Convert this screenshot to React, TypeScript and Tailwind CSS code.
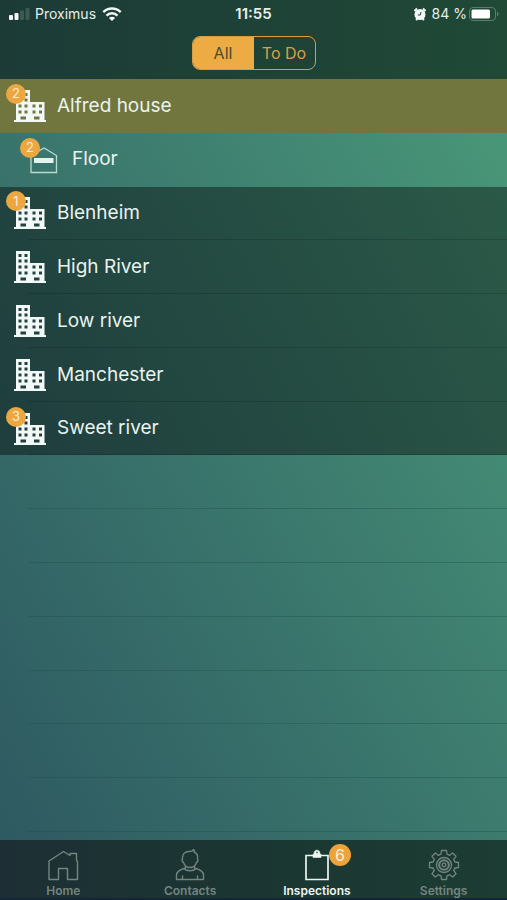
import React, { useState } from 'react';

interface Place {
  name: string;
  kind: 'building' | 'floor';
  count?: number;
  selected?: boolean;
}

interface TabItem {
  label: string;
  icon: React.ReactNode;
  count?: number;
}

const places: Place[] = [
  { name: 'Alfred house', kind: 'building', count: 2, selected: true },
  { name: 'Floor', kind: 'floor', count: 2 },
  { name: 'Blenheim', kind: 'building', count: 1 },
  { name: 'High River', kind: 'building' },
  { name: 'Low river', kind: 'building' },
  { name: 'Manchester', kind: 'building' },
  { name: 'Sweet river', kind: 'building', count: 3 },
];

const blankRows = [0, 1, 2, 3, 4, 5, 6];

const BuildingIcon = () => (
  <svg viewBox="0 0 32 32" className="h-8 w-8" fill="#f2f8f5" fillRule="evenodd" aria-hidden="true">
    {/* walls with the windows cut out */}
    <path d="M2 0H16V12H30.500V30H32V32H0V30H2ZM4.500 3V6H7.500V3ZM10.500 3V6H13.500V3ZM4.500 8.500V11.500H7.500V8.500ZM10.500 8.500V11.500H13.500V8.500ZM4.500 14.500V17.500H7.500V14.500ZM10.500 14.500V17.500H13.500V14.500ZM4.500 20.500V23.500H7.500V20.500ZM10.500 20.500V23.500H13.500V20.500ZM18.500 14.500V17.500H21.500V14.500ZM25 14.500V17.500H28V14.500ZM18.500 20.500V23.500H21.500V20.500ZM25 20.500V23.500H28V20.500ZM6.500 26.500V29.500H12V26.500ZM20 26.500V29.500H25.500V26.500Z" />
  </svg>
);

const FloorIcon = () => (
  <svg viewBox="0 0 28 28" className="h-7 w-7" fill="none" aria-hidden="true">
    <path d="M1 26.500V9.500L14 2L26.500 9.500V26.500Z" stroke="#b5dccf" strokeWidth="1.300" />
    <path d="M4 12H23.500V17H4Z" fill="#e4f3ee" />
  </svg>
);

const HomeIcon = () => (
  <svg viewBox="0 0 32 32" className="h-8 w-8" fill="none" stroke="currentColor" strokeWidth="1.400" strokeLinejoin="round" aria-hidden="true">
    <path d="M2 30.500V12L16.500 2.500L23 6.500V4.500H29.500V11.500L30.500 12.500V30.500H20.500V19.500H11.500V30.500Z" />
  </svg>
);

const ContactIcon = () => (
  <svg viewBox="0 0 32 32" className="h-8 w-8" fill="none" stroke="currentColor" strokeWidth="1.400" strokeLinejoin="round" strokeLinecap="round" aria-hidden="true">
    <path d="M8.500 10C8 5 11 2.500 15 2.500C17 2.500 19 2 19.500 0.500C20.500 1.500 20.500 2.500 20 3C23 4 24 6.500 23.500 10C24.500 11 23.500 13 22.500 13.500C21.500 16.500 19 18.500 16 18.500C13 18.500 10.500 16.500 9.500 13.500C8.500 13 7.500 11 8.500 10Z" />
    <path d="M11.500 17.500V19C6 20.500 2.500 22 2.500 26V30.500H29.500V26C29.500 22 26 20.500 20.500 19V17.500" />
    <path d="M10 19.500C12.500 22.500 19.500 22.500 22 19.500M8.500 27V30M23.500 27V30" />
  </svg>
);

const ClipboardIcon = () => (
  <svg viewBox="0 0 32 32" className="h-8 w-8" fill="none" aria-hidden="true">
    <path d="M5 6.500H27V30.500H5Z" stroke="currentColor" strokeWidth="1.700" />
    <path fillRule="evenodd" d="M12 8.500V5.500L13 4.500C13 0 19 0 19 4.500L20 5.500V8.500ZM16 2.500A1 1 0 1 0 16 4.500A1 1 0 1 0 16 2.500Z" fill="currentColor" stroke="currentColor" strokeWidth="0.600" />
  </svg>
);

const GearIcon = () => (
  <svg viewBox="0 0 32 32" className="h-8 w-8" fill="none" stroke="currentColor" strokeWidth="1.300" strokeLinejoin="round" aria-hidden="true">
    <path d="M13.500 1.500H18.500L19 5.200L21.700 6.300L24.700 4L28 7.300L25.700 10.300L26.800 13L30.500 13.500V18.500L26.800 19L25.700 21.700L28 24.700L24.700 28L21.700 25.700L19 26.800L18.500 30.500H13.500L13 26.800L10.300 25.700L7.300 28L4 24.700L6.300 21.700L5.200 19L1.500 18.500V13.500L5.200 13L6.300 10.300L4 7.300L7.300 4L10.300 6.300L13 5.200Z" />
    <circle cx="16" cy="16" r="7.500" />
    <circle cx="16" cy="16" r="4.800" strokeWidth="2" />
    <circle cx="16" cy="16" r="1.800" />
  </svg>
);

const tabs: TabItem[] = [
  { label: 'Home', icon: <HomeIcon /> },
  { label: 'Contacts', icon: <ContactIcon /> },
  { label: 'Inspections', icon: <ClipboardIcon />, count: 6 },
  { label: 'Settings', icon: <GearIcon /> },
];

const StatusBar = () => (
  <div className="grid h-7 grid-cols-3 items-center px-2 text-sm text-[#e6efeb]">
    <div className="flex items-center gap-1">
      <svg viewBox="0 0 22 12" className="h-3 w-[22px]" aria-hidden="true">
        <rect x="1" y="7" width="4" height="5" rx="1" fill="#f2f8f5" />
        <rect x="6.500" y="5" width="4" height="7" rx="1" fill="#f2f8f5" />
        <rect x="12" y="2.500" width="4" height="9.500" rx="1" fill="#3c5c52" />
        <rect x="17.500" y="0" width="4" height="12" rx="1" fill="#3c5c52" />
      </svg>
      <span className="ml-px">Proximus</span>
      <svg viewBox="0 0 20 14" className="ml-[2px] h-[14px] w-5" fill="none" stroke="#f2f8f5" strokeWidth="2.400" aria-hidden="true">
        <path d="M1.300 5.200C6.200 0.300 13.800 0.300 18.700 5.200" />
        <path d="M4.500 8.600C7.500 5.500 12.500 5.500 15.500 8.600" />
        <path d="M10 14L6.900 10.900C8.700 9.200 11.300 9.200 13.100 10.900Z" fill="#f2f8f5" stroke="none" />
      </svg>
    </div>
    <span className="text-center text-[15px] font-semibold">11:55</span>
    <div className="flex items-center justify-end gap-[2px]">
      <svg viewBox="0 0 14 14" className="mr-[3px] h-[14px] w-[14px]" aria-hidden="true">
        <path d="M1.500 4L4 1.500M12.500 4L10 1.500M3 13L4.500 11.500M11 13L9.500 11.500" stroke="#f2f8f5" strokeWidth="2" />
        <circle cx="7" cy="7.500" r="5.500" fill="#f2f8f5" />
        <path d="M8 5L7.300 8H4.800" fill="none" stroke="#1f4237" strokeWidth="1" />
      </svg>
      <span>84 %</span>
      <svg viewBox="0 0 30 14" className="h-[14px] w-[30px]" aria-hidden="true">
        <rect x="0.500" y="0.500" width="26" height="13" rx="3.500" fill="none" stroke="#5d7b70" />
        <rect x="2.500" y="2.500" width="18.500" height="9" rx="1.500" fill="#ffffff" />
        <path d="M28 4.500C30 5.500 30 8.500 28 9.500Z" fill="#5d7b70" />
      </svg>
    </div>
  </div>
);

const PlaceRow = ({ place }: { place: Place }) => {
  const isFloor = place.kind === 'floor';
  const background = place.selected ? 'bg-[#70763e]' : isFloor ? '' : 'bg-black/40';

  return (
    <li className={`flex flex-1 ${background}`}>
      <button
        type="button"
        className={`relative flex flex-1 items-center text-left text-[19px] text-[#e9f3ee] ${isFloor ? 'gap-[14px] pl-[30px]' : 'gap-[11px] pl-[14px]'}`}
      >
        <span className="relative">
          {isFloor ? <FloorIcon /> : <BuildingIcon />}
          {place.count && (
            <span className={`absolute flex h-5 w-5 items-center justify-center rounded-full bg-[#eca740] text-[13px] text-[#f8efd8] ${isFloor ? '-left-[10px] -top-2' : '-left-2 -top-[6px]'}`}>
              {place.count}
            </span>
          )}
        </span>
        <span>{place.name}</span>
        {!place.selected && !isFloor && (
          <span className="absolute bottom-0 left-7 right-0 h-px bg-black/15" />
        )}
      </button>
    </li>
  );
};

const App: React.FC = () => {
  const [filter, setFilter] = useState('All');
  const [activeTab, setActiveTab] = useState('Inspections');

  return (
    <div className="flex min-h-screen flex-col bg-linear-to-tr from-[#2d5760] to-[#4b9c7a] font-[Inter,sans-serif]">
      <header className="h-[79px] bg-linear-to-r from-[#1c3b37] to-[#204936]">
        <StatusBar />
        <div className="flex justify-center pt-2">
          <div className="flex h-[34px] w-[124px] overflow-hidden rounded-lg border border-[#d69d41]">
            {['All', 'To Do'].map((item) => (
              <button
                key={item}
                type="button"
                aria-pressed={filter === item}
                onClick={() => setFilter(item)}
                className={`flex-1 basis-0 whitespace-nowrap text-base ${filter === item ? 'bg-[#edab43] text-[#4d4a2c]' : 'text-[#d9a043]'}`}
              >
                {item}
              </button>
            ))}
          </div>
        </div>
      </header>

      <main className="flex flex-1 flex-col pb-2">
        <ul className="flex flex-1 basis-0 flex-col">
          {places.map((place) => (
            <PlaceRow key={place.name} place={place} />
          ))}
        </ul>
        {/* Empty rows keep their separators */}
        <div className="flex flex-1 basis-0 flex-col pl-7">
          {blankRows.map((row) => (
            <div key={row} className="flex-1 border-b border-[#1d4f4c]/40" />
          ))}
        </div>
      </main>

      <nav className="grid h-[60px] grid-cols-4 border-b-2 border-[#14243a] bg-linear-to-r from-[#1d2f34] via-[#1b3632] to-[#1c3d33]">
        {tabs.map((tab) => (
          <button
            key={tab.label}
            type="button"
            onClick={() => setActiveTab(tab.label)}
            className={`flex flex-col items-center pt-[9px] ${activeTab === tab.label ? 'text-[#edf5f1]' : 'text-[#73857f]'}`}
          >
            <span className="relative">
              {tab.icon}
              {tab.count && (
                <span className="absolute -right-[18px] -top-[5px] flex h-[22px] w-[22px] items-center justify-center rounded-full bg-[#eca33b] text-base text-[#f8efd8]">
                  {tab.count}
                </span>
              )}
            </span>
            <span className="text-[12px] leading-5 font-semibold">{tab.label}</span>
          </button>
        ))}
      </nav>
    </div>
  );
};

export default App;
